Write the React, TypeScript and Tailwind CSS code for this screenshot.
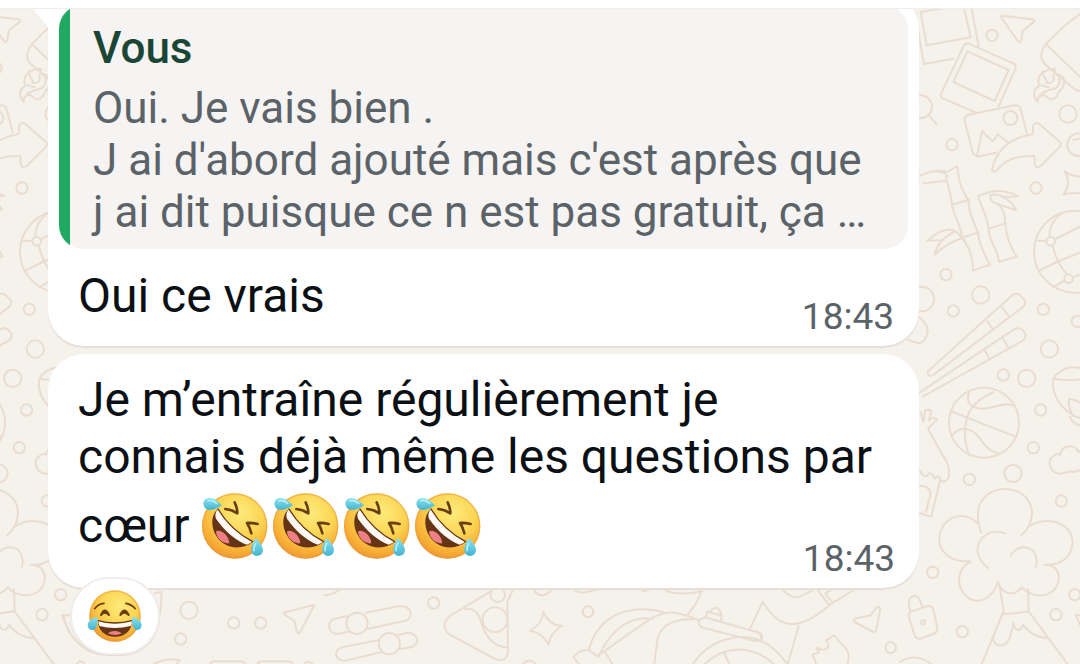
import React from "react";

function DoodleTile() {
  return (
    <>
      <g transform="scale(0.333333)">
        <path d="M62 36 L190 14 L212 112 L80 136 Z M45 40 L72 192 L160 176 M214 20 L236 140" />
        <path d="M204 130 L340 190 Q350 196 346 206 L296 320 M204 130 Q194 130 190 140 L122 284 Q122 292 130 296 L228 338" />
        <path d="M202 154 L326 210 L284 303 L160 246 Z" />
        <path d="M304 47 L398 58 Q408 61 400 67 L368 92 L364 120 Q361 132 353 122 L306 56 Q301 48 304 47 Z" />
        <circle cx="276" cy="106" r="17" />
        <path d="M560 30 Q500 65 440 130 Q412 165 432 190 L520 265 Q550 285 575 260 M440 134 L550 240" />
        <path d="M414 306 C396 290 400 266 418 258 C408 232 424 208 466 206 C456 222 470 224 482 226 C502 240 492 262 476 276 C472 296 454 302 444 294 C430 276 408 290 414 306 Z M428 214 C430 236 442 236 440 248 C460 252 464 240 460 226 M474 222 C484 246 476 264 458 268 C440 272 428 276 420 286 M424 256 L446 262" />
        <circle cx="504" cy="342" r="26" />
        <circle cx="62" cy="320" r="34" />
        <path d="M87 347 L110 372" />
        <path d="M380 398 L362 328 Q358 314 344 316 L206 344 Q190 348 194 364 L218 456 Q224 472 238 469 L288 458" />
        <circle cx="331" cy="354" r="21" />
        <path d="M232 464 L246 394 L278 424 L294 403 L322 427" />
        <path d="M276 510 C288 452 328 414 398 402 L400 376 Q406 364 418 372 L480 426 Q486 432 480 440 L422 498 Q408 506 404 492 L403 468 C340 466 312 484 290 512 Q280 520 276 510 Z" />
        <circle cx="156" cy="434" r="17" />
        <circle cx="408" cy="564" r="17" />
        <path d="M494 514 Q520 532 560 530 M494 514 Q516 552 490 584 Q520 574 560 584" />
        <path d="M30 545 Q92 502 142 516 L172 498 C176 540 182 570 206 600 L156 614 C154 590 148 570 140 542 L70 550 M110 514 Q150 520 138 536" />
        <path d="M206 600 C202 630 222 668 234 697 L186 714 C186 680 158 640 156 614 M234 697 C236 725 254 768 270 794 L218 812 C222 780 208 740 186 714" />
        <path d="M234 588 L270 576 Q310 566 354 588 Q320 594 302 588 M234 588 C244 620 262 650 266 686 L316 670 C316 640 304 620 292 612 L348 630 Q336 604 306 590 Q282 576 270 588 Q268 602 292 612" />
        <path d="M266 686 C264 720 296 752 297 786 L350 770 C330 740 318 706 316 670 M186 714 Q150 660 82 722 L130 720 M186 714 Q140 730 104 764 Q112 722 162 696" />
        <circle cx="525" cy="755" r="123" />
        <circle cx="452" cy="724" r="13" />
        <circle cx="506" cy="836" r="13" />
        <path d="M448 710 Q446 670 486 638 M458 736 Q470 790 502 824 M464 718 L560 670 M414 722 L438 722 M418 812 L470 786 L580 742 M462 860 L494 842 M518 832 L600 802" />
        <circle cx="536" cy="434" r="34" />
        <path d="M520 420 L570 410" />
      </g>

      <g transform="translate(0 200) scale(0.333333)">
        <circle cx="138" cy="224" r="17" />
        <circle cx="242" cy="285" r="26" />
        <circle cx="160" cy="333" r="17" />
        <circle cx="65" cy="297" r="37" />
        <circle cx="430" cy="328" r="17" />
        <circle cx="532" cy="364" r="17" />
        <circle cx="448" cy="447" r="26" />
        <circle cx="380" cy="535" r="26" />
        <circle cx="310" cy="525" r="17" />
        <circle cx="422" cy="630" r="17" />
        <path d="M84 514 L334 288 Q346 276 358 284 L372 298 Q380 308 370 320 L98 526 Q82 532 84 514 Z M262 364 L278 386 M306 322 L326 348" />
        <path d="M40 590 L342 388 Q358 380 368 390 L376 402 Q380 412 368 422 L68 590 M252 448 L268 476 M306 412 L326 444" />
        <path d="M50 345 Q90 376 82 402 Q74 428 56 430 L24 420" />
        <circle cx="252" cy="668" r="105" />
        <path d="M208 576 C194 610 216 626 250 626 C292 622 310 606 338 616 M280 576 C206 610 190 650 196 724 C200 744 204 756 208 766 M158 636 L346 710 M158 706 C182 674 214 686 234 708 C254 736 268 756 296 760" />
        <path d="M460 536 C488 496 530 494 570 516 M460 536 C450 590 500 660 580 660 M462 536 Q500 544 560 536 M508 596 Q502 620 520 648 M508 596 Q550 602 570 640 M510 650 Q520 680 560 678" />
        <path d="M62 636 L70 666 L76 630 Q90 626 94 636 L86 662 Q100 648 112 658 L84 686 L134 776" />
      </g>

      <g transform="translate(0 430) scale(0.333333)">
        <path d="M134 82 Q154 122 144 146 Q134 160 122 152 Q116 130 104 146 Q90 118 82 138 Q66 140 60 122 M120 152 L94 260 L58 250 M92 190 L78 246 M50 168 Q88 164 92 190" />
        <circle cx="400" cy="53" r="17" />
        <circle cx="339" cy="130" r="26" />
        <circle cx="208" cy="148" r="17" />
        <circle cx="484" cy="213" r="17" />
        <path d="M550 126 Q526 116 526 126 Q514 122 496 128 Q474 136 458 122 Q436 92 464 76 Q474 68 480 74 Q488 42 520 50 Q530 54 536 66 Q552 58 560 72" />
        <path d="M244 308 Q234 290 234 248 C240 152 392 154 396 248 Q396 288 364 316 M230 278 C206 252 160 248 132 284 C96 338 130 398 212 394 M212 394 C174 414 168 458 190 488 C222 532 276 512 294 456 C302 484 334 508 366 472 C392 502 438 504 464 478 C490 440 472 402 434 404 C484 406 514 382 518 338 C514 272 436 258 386 290" />
        <path d="M316 310 C262 292 226 332 234 372 Q244 400 264 414 M332 378 C356 332 422 348 408 410" />
        <path d="M298 462 L312 552 Q350 550 386 544 L384 478 M308 550 L238 720 M386 544 L510 712 M306 552 L278 626 Q288 654 312 644 Q330 638 340 580 Q344 600 356 600 Q366 596 370 584 C382 604 408 622 440 624" />
        <circle cx="98" cy="427" r="17" />
        <circle cx="524" cy="494" r="17" />
        <circle cx="468" cy="554" r="17" />
        <circle cx="187" cy="605" r="17" />
        <path d="M34 544 L84 528 Q96 526 100 538 L112 592 Q114 606 100 612 L62 626 Q48 628 44 616 L26 560 Q24 548 34 544 Z M30 540 Q20 500 44 497 Q60 498 66 530" />
        <circle cx="69" cy="577" r="6" />
        <path d="M560 556 L528 556 L550 608 M0 696 Q48 666 96 704" />
      </g>
    </>
  );
}

function Wallpaper() {
  return (
    <svg
      aria-hidden="true"
      className="absolute inset-0 h-full w-full"
      fill="none"
      stroke="#e9ddd1"
      strokeWidth="6"
      strokeLinecap="round"
      strokeLinejoin="round"
    >
      <g transform="translate(900 0)">
        <DoodleTile />
      </g>
      <g transform="translate(-114 0)">
        <DoodleTile />
      </g>
      <g transform="translate(60 560) scale(0.333333)">
        <path d="M10 168 C30 250 90 290 150 282 C240 280 310 220 304 96 L284 100 M8 168 L40 162" />
        <circle cx="387" cy="151" r="26" />
        <circle cx="521" cy="189" r="17" />
        <circle cx="602" cy="189" r="17" />
        <circle cx="362" cy="237" r="17" />
        <path d="M670 158 L764 134 L720 216 Q714 226 710 212 L704 184 L674 164 Z M794 106 Q824 104 850 80" />
        <path d="M862 168 L824 176 Q804 184 808 204 Q814 222 834 222 L870 214 M918 158 L1020 138 Q1046 138 1052 158 Q1052 176 1038 182 L924 206" />
        <circle cx="891" cy="190" r="32" />
        <path d="M956 240 L846 262 Q826 268 828 286 Q836 304 856 302 L964 276 M1012 226 L1044 218 Q1066 220 1072 238 Q1070 258 1052 262 L1018 268" />
        <circle cx="988" cy="251" r="32" />
        <path d="M270 320 Q310 290 358 300 L346 320 M450 320 Q450 304 464 304 L544 304 Q558 306 558 320 M590 320 Q592 304 606 304 L686 304 Q700 306 702 320 M48 318 Q60 290 78 318 M730 314 Q746 296 760 314" />
      </g>
      <g transform="translate(400 560) scale(0.333333)">
        <circle cx="101" cy="129" r="17" />
        <circle cx="293" cy="104" r="22" />
        <circle cx="285" cy="179" r="37" />
        <path d="M272 94 L150 168 Q120 196 146 222 L288 298 Q320 306 324 276 L322 124 L344 80 M196 148 C228 142 240 168 248 200 C262 240 290 262 322 262" />
        <path d="M430 156 Q448 196 486 198 Q450 218 446 254 Q428 218 390 212 Q426 194 430 156 Z" />
        <circle cx="564" cy="155" r="16" />
        <path d="M402 88 Q408 106 430 106 Q450 100 458 84 M520 86 Q530 98 550 98 L604 86 M716 84 Q734 104 752 84 M790 88 Q830 110 906 94 L908 84 M902 100 L888 130 L862 166" />
        <path d="M566 270 C586 190 650 148 724 148 Q760 148 790 156 M596 290 C626 220 680 166 758 176 M566 270 Q536 268 520 292 L540 316 M566 270 L592 288 L740 184 Q780 156 820 158 Q850 160 896 180 M762 320 L772 240 Q786 172 890 178 M616 278 L640 316" />
        <path d="M914 172 L1070 216 Q1088 224 1084 236 Q1080 246 1062 242 L904 202 Q890 190 900 178 Z M918 170 L922 154 L966 168 L962 184 M930 156 Q936 142 950 144 Q964 150 962 164 M368 312 Q388 292 408 312" />
      </g>
      <g transform="translate(700 560) scale(0.333333)">
        <path d="M-24 316 C34 226 150 206 220 266 Q248 290 264 316 M10 316 C80 250 160 256 226 316 M72 276 L88 312 M150 206 L188 126 C216 170 242 194 282 192 C330 186 354 162 396 130 L470 84 M296 198 L264 310 M240 80 Q272 120 300 110 L346 86 M350 86 L388 136 M376 100 L396 126 M376 100 L396 88 M170 214 L182 220 Q190 232 180 244 L166 240" />
        <path d="M464 176 L512 166 L530 142 Q542 138 540 152 L528 212 Q524 218 516 214 L464 186 Q460 180 464 176 Z" />
        <path d="M350 316 L338 284 L356 278 L350 264 Q374 276 384 262 Q388 250 378 242 L402 226 L440 268 Q450 280 442 316" />
        <circle cx="572" cy="263" r="16" />
      </g>
    </svg>
  );
}

function EmojiDefs() {
  return (
    <svg aria-hidden="true" className="absolute h-0 w-0">
      <defs>
        <radialGradient id="face" cx="0.58" cy="0.3" r="0.72">
          <stop offset="0" stopColor="#fdeb7c" />
          <stop offset="0.5" stopColor="#fbd452" />
          <stop offset="0.85" stopColor="#f7ac33" />
          <stop offset="1" stopColor="#ec9536" />
        </radialGradient>
        <linearGradient id="tear" x1="0" y1="0" x2="0" y2="1">
          <stop offset="0" stopColor="#8fe3ee" />
          <stop offset="1" stopColor="#41b3d2" />
        </linearGradient>
      </defs>
    </svg>
  );
}

function RollingFace() {
  return (
    <svg viewBox="27 33 213 210" className="h-[70px] w-[71px]" role="img" aria-label="🤣">
      <circle cx="134" cy="138" r="98" fill="url(#face)" />
      <circle cx="134" cy="138" r="96" fill="none" stroke="#e89a3c" strokeWidth="4" opacity="0.55" />
      <path d="M84 86 C54 112 66 166 100 190 C130 210 166 204 188 186 C150 166 112 134 84 86 Z" fill="#643414" />
      <path d="M78 154 C90 146 116 164 118 190 C98 192 78 174 78 154 Z" fill="#ee7f86" />
      <path d="M84 88 C76 96 74 106 78 116 C104 154 138 182 170 194 Q182 192 187 184 C148 164 112 134 84 88 Z" fill="#fff8f4" />
      <path d="M84 87 C112 134 148 164 188 185" fill="none" stroke="#5f3512" strokeWidth="4" strokeLinecap="round" />
      <path d="M134 67 Q142 84 142 100 Q124 88 106 87" fill="none" stroke="#6b3d12" strokeWidth="8" strokeLinecap="round" strokeLinejoin="round" />
      <path d="M203 132 Q186 128 171 129 Q180 142 184 160" fill="none" stroke="#6b3d12" strokeWidth="8" strokeLinecap="round" strokeLinejoin="round" />
      <path d="M96 76 Q76 54 58 54 Q40 56 40 72 Q42 88 58 90 Q76 90 96 76 Z" fill="url(#tear)" />
      <path d="M54 62 Q66 58 80 70" fill="none" stroke="#b9f1f5" strokeWidth="5" strokeLinecap="round" />
      <path d="M198 174 Q182 194 184 212 Q188 228 202 228 Q218 226 219 210 Q218 194 198 174 Z" fill="url(#tear)" />
      <path d="M197 190 Q190 202 192 212" fill="none" stroke="#b9f1f5" strokeWidth="5" strokeLinecap="round" />
    </svg>
  );
}

function JoyFace() {
  return (
    <svg viewBox="46 46 174 168" className="h-14 w-[58px]" aria-hidden="true">
      <circle cx="133" cy="130" r="77" fill="url(#face)" />
      <circle cx="133" cy="130" r="75" fill="none" stroke="#e89a3c" strokeWidth="4" opacity="0.55" />
      <path d="M82 144 Q132 164 184 144 C184 174 162 192 133 192 C104 192 82 174 82 144 Z" fill="#643414" />
      <path d="M82 144 Q132 160 184 144 Q184 154 180 160 Q132 172 86 160 Z" fill="#fff8f4" />
      <path d="M82 144 Q132 158 184 144" fill="none" stroke="#5f3512" strokeWidth="4" strokeLinecap="round" />
      <path d="M111 182 Q132 168 154 182 Q134 192 111 182 Z" fill="#ee7f86" />
      <path d="M91 127 Q102 100 115 127 Q102 114 91 127 Z M149 127 Q161 100 174 127 Q161 114 149 127 Z" fill="#6b3d12" stroke="#6b3d12" strokeWidth="6" strokeLinejoin="round" />
      <path d="M72 108 Q82 94 100 92 M166 92 Q184 96 194 108" fill="none" stroke="#6b3d12" strokeWidth="5" strokeLinecap="round" />
      <path d="M80 132 Q54 138 51 156 Q52 172 66 172 Q84 168 80 132 Z M184 132 Q210 138 213 156 Q212 172 198 172 Q182 168 184 132 Z" fill="url(#tear)" />
    </svg>
  );
}

const laughs = [1, 2, 3, 4];

export default function App() {
  return (
    <div className="relative flex min-h-screen flex-col overflow-hidden bg-[#f5f2eb] font-[Roboto,sans-serif]">
      <Wallpaper />
      <EmojiDefs />
      <header className="relative z-10 h-[9px] border-b border-[#eeeeec] bg-white" />
      <main className="relative mr-[161px] ml-12 flex flex-col gap-2">
        <article className="relative -mt-4 rounded-[36px] bg-white px-[11px] pt-3 shadow-[0_2px_1px_#e6ded7]">
          <svg aria-hidden="true" viewBox="0 0 40 48" className="absolute top-0 -left-5 h-12 w-10" fill="#ffffff">
            <path d="M0 10 L5 16 L20 34 L20 42 L40 42 L40 10 Z" />
          </svg>
          <blockquote className="relative flex overflow-hidden rounded-3xl bg-[#f5f4f2] text-[44px] leading-[52px] text-[#5b6368]">
            <div className="w-[11px] shrink-0 bg-[#20aa61]" />
            <div className="pt-[17px] pr-6 pb-[11px] pl-[23px]">
              <p className="pb-2 font-medium text-[#1b4534]">Vous</p>
              <p>
                Oui. Je vais bien .<br />
                J ai d'abord ajouté mais c'est après que
                <br />j ai dit puisque ce n est pas gratuit, ça …
              </p>
            </div>
          </blockquote>
          <div className="flex items-end justify-between pt-[18px] pr-[14px] pb-[10px] pl-[19px]">
            <p className="pb-3 text-[48px] leading-[57px] text-[#0b1014]">Oui ce vrais</p>
            <time className="text-[37px] leading-[38px] text-[#5b6368]">18:43</time>
          </div>
        </article>

        <article className="relative rounded-[36px] bg-white pt-[17px] pr-6 pb-[10px] pl-[30px] shadow-[0_2px_1px_#e6ded7]">
          <p className="text-[48px] leading-[57px] text-[#0b1014]">
            Je m’entraîne régulièrement je
            <br />
            connais déjà même les questions par
          </p>
          <div className="flex items-end justify-between">
            <p className="flex items-center pt-1 pb-4 text-[48px] leading-[73px] text-[#0b1014]">
              <span className="pr-[10px]">cœur</span>
              {laughs.map((n) => (
                <RollingFace key={n} />
              ))}
            </p>
            <time className="text-[37px] leading-[38px] text-[#5b6368]">18:43</time>
          </div>
          <button
            aria-label="Réaction 😂"
            className="absolute -bottom-[67px] left-[22px] flex h-[78px] w-[90px] items-center justify-center rounded-full border-2 border-[#f0edea] bg-white shadow-[0_1px_1px_#e0d9d2]"
          >
            <JoyFace />
          </button>
        </article>
      </main>
    </div>
  );
}
